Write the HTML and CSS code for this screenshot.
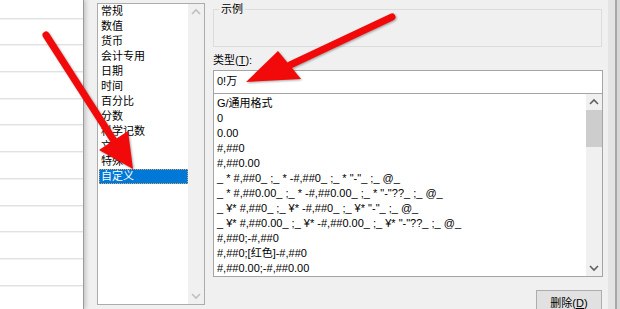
FILE: index.html
```html
<!DOCTYPE html>
<html lang="zh-CN">
<head>
    <meta charset="UTF-8">
    <title>设置单元格格式</title>
    <link rel="stylesheet" href="styles.css">
</head>
<body>
    <div class="screen">
        <!-- worksheet behind the dialog -->
        <div class="sheet"></div>

        <div class="dialog">
            <!-- category list -->
            <div class="category">
                <ul class="items">
                    <li>常规</li>
                    <li>数值</li>
                    <li>货币</li>
                    <li>会计专用</li>
                    <li>日期</li>
                    <li>时间</li>
                    <li>百分比</li>
                    <li>分数</li>
                    <li>科学记数</li>
                    <li>文本</li>
                    <li>特殊</li>
                    <li class="selected">自定义</li>
                </ul>
                <div class="scrollbar disabled">
                    <svg class="chev" viewBox="0 0 16 16"><polyline points="4,10 8,6 12,10"/></svg>
                    <svg class="chev" viewBox="0 0 16 16"><polyline points="4,6 8,10 12,6"/></svg>
                </div>
            </div>

            <div class="pane">
                <fieldset class="sample">
                    <legend>示例</legend>
                </fieldset>

                <label class="type-label">类型(<u>T</u>):</label>
                <div class="type-input">0!万</div>

                <div class="format-list">
                    <ul class="items">
                        <li>G/通用格式</li>
                        <li>0</li>
                        <li>0.00</li>
                        <li>#,##0</li>
                        <li>#,##0.00</li>
                        <li>_ * #,##0_ ;_ * -#,##0_ ;_ * "-"_ ;_ @_</li>
                        <li>_ * #,##0.00_ ;_ * -#,##0.00_ ;_ * "-"??_ ;_ @_</li>
                        <li>_ ¥* #,##0_ ;_ ¥* -#,##0_ ;_ ¥* "-"_ ;_ @_</li>
                        <li>_ ¥* #,##0.00_ ;_ ¥* -#,##0.00_ ;_ ¥* "-"??_ ;_ @_</li>
                        <li>#,##0;-#,##0</li>
                        <li>#,##0;[红色]-#,##0</li>
                        <li>#,##0.00;-#,##0.00</li>
                    </ul>
                    <div class="scrollbar">
                        <svg class="chev" viewBox="0 0 16 16"><polyline points="4,10 8,6 12,10"/></svg>
                        <div class="thumb"></div>
                        <div class="track"></div>
                        <svg class="chev" viewBox="0 0 16 16"><polyline points="4,6 8,10 12,6"/></svg>
                    </div>
                </div>

                <div class="actions">
                    <button class="btn">删除(<u>D</u>)</button>
                </div>
            </div>
        </div>

        <div class="edge"></div>

        <!-- red annotation arrows -->
        <svg class="arrows" viewBox="0 0 620 309">
            <line x1="46" y1="35" x2="116" y2="144"/>
            <polygon points="133,169 128,131 99,150"/>
            <line x1="392" y1="17" x2="290" y2="65"/>
            <polygon points="246,82 278,51 301,79"/>
        </svg>
    </div>
</body>
</html>
```

FILE: styles.css
```css
* {
    margin: 0;
    padding: 0;
    box-sizing: border-box;
}
body {
    font-family: "Liberation Sans", "Noto Sans CJK SC", sans-serif;
    font-size: 11px;
    color: #000;
    overflow: hidden;
}
.screen {
    position: relative;
    display: flex;
    width: 620px;
    height: 309px;
    overflow: hidden;
}
.sheet {
    position: relative;
    z-index: 1;
    width: 84px;
    background-color: #fff;
    background-image: repeating-linear-gradient(to bottom, transparent 0 25.7px, #d4d4d4 25.7px 26.7px);
    background-position: 0 -7.7px;
    border-right: 1px solid #9a9a9a;
    box-shadow: 2px 0 4px rgba(0, 0, 0, 0.18);
}
.dialog {
    display: flex;
    gap: 8px;
    width: 524px;
    padding: 0 5px 0 13px;
    background: #f0f0f0;
}
.items {
    list-style: none;
    flex: 1;
}
.items li {
    height: 15px;
    line-height: 15px;
    white-space: pre;
}

/* category list */
.category {
    display: flex;
    width: 108px;
    height: 302px;
    margin-top: 3px;
    background: #fff;
    border: 1px solid #acacac;
}
.category .items li {
    margin-left: 1px;
    padding-left: 2px;
}
.category .items li.selected {
    background: #0078d7;
    color: #fff;
    outline: 1px dotted #d9a66a;
    outline-offset: -1px;
}
.scrollbar {
    display: flex;
    flex-direction: column;
    justify-content: space-between;
    width: 16px;
    background: #f0f0f0;
}
.chev {
    display: block;
    width: 16px;
    height: 16px;
    fill: none;
    stroke: #606060;
    stroke-width: 1.6;
}
.scrollbar.disabled .chev {
    stroke: #bfbfbf;
}

/* right pane */
.pane {
    display: flex;
    flex-direction: column;
    width: 390px;
    padding-top: 2px;
}
.pane > * {
    flex-shrink: 0;
}
.sample {
    height: 45px;
    width: 389px;
    border: 1px solid #dcdcdc;
}
.sample legend {
    margin-left: 5px;
    padding: 0 2px;
    line-height: 15px;
}
.type-label {
    margin-top: 6px;
    line-height: 15px;
}
.type-input {
    height: 23px;
    margin-top: 2px;
    padding-left: 3px;
    line-height: 21px;
    background: #fff;
    border: 1px solid #a5a5a5;
    border-bottom: none;
}
.format-list {
    display: flex;
    height: 184px;
    background: #fff;
    border: 1px solid #a5a5a5;
    overflow: hidden;
}
.format-list .items {
    padding: 2px 0 0 3px;
}
.format-list .thumb {
    height: 37px;
    background: #cdcdcd;
}
.format-list .track {
    flex: 1;
}
.actions {
    display: flex;
    justify-content: flex-end;
    margin-top: 13px;
    padding-right: 1px;
}
.btn {
    width: 66px;
    height: 24px;
    font: inherit;
    background: #e1e1e1;
    border: 1px solid #adadad;
}

.edge {
    flex: 1;
    background: linear-gradient(to right, #e4e4e4 0 7px, #a8a8a8 7px 9px, #d8d8d8 9px);
}

/* annotation arrows */
.arrows {
    position: absolute;
    left: 0;
    top: 0;
    z-index: 2;
    width: 620px;
    height: 309px;
    filter: drop-shadow(1px 1px 1px rgba(0, 0, 0, 0.35));
}
.arrows line {
    stroke: #f20a0a;
    stroke-width: 7;
    stroke-linecap: round;
}
.arrows polygon {
    fill: #f20a0a;
}
```
